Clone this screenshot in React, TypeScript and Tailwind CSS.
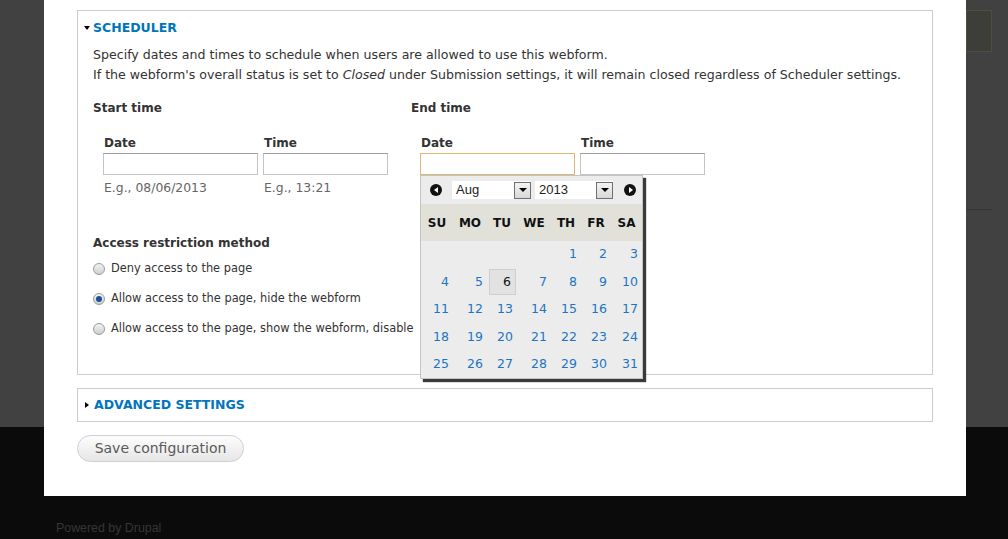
import React from 'react';

const weeks: (number | null)[][] = [
  [null, null, null, null, 1, 2, 3],
  [4, 5, 6, 7, 8, 9, 10],
  [11, 12, 13, 14, 15, 16, 17],
  [18, 19, 20, 21, 22, 23, 24],
  [25, 26, 27, 28, 29, 30, 31],
];

const dayNames = ['SU', 'MO', 'TU', 'WE', 'TH', 'FR', 'SA'];

const SelectBox = ({ value, width }: { value: string; width: string }) => (
  <div className={`${width} h-[18px] bg-white flex items-center justify-between`}>
    <span className="pl-[4px] text-[13px] text-[#222] font-['Liberation_Sans',Arial,sans-serif]">{value}</span>
    <span className="w-[17px] h-[17px] border border-[#707070] bg-gradient-to-b from-[#f4f4f4] to-[#d8d8d8] flex items-center justify-center">
      <span className="w-0 h-0 border-l-[4px] border-r-[4px] border-t-[4px] border-l-transparent border-r-transparent border-t-black" />
    </span>
  </div>
);

const NavCircle = ({ dir }: { dir: 'prev' | 'next' }) => (
  <span className="w-[12px] h-[12px] rounded-full bg-[#111] flex items-center justify-center">
    {dir === 'prev' ? (
      <span className="w-0 h-0 border-t-[3px] border-b-[3px] border-r-[4px] border-t-transparent border-b-transparent border-r-white mr-[1px]" />
    ) : (
      <span className="w-0 h-0 border-t-[3px] border-b-[3px] border-l-[4px] border-t-transparent border-b-transparent border-l-white ml-[1px]" />
    )}
  </span>
);

const DatePicker = () => (
  <div className="absolute left-0 top-[22px] z-10 w-[223px] h-[204px] bg-[#ececec] border border-[#c4c4c4] shadow-[3px_3px_1px_#3a3a3a]">
    {/* header */}
    <div className="h-[28px] flex items-center">
      <span className="ml-[9px]"><NavCircle dir="prev" /></span>
      <span className="ml-[10px]"><SelectBox value="Aug" width="w-[79px]" /></span>
      <span className="ml-[4px]"><SelectBox value="2013" width="w-[78px]" /></span>
      <span className="ml-[11px]"><NavCircle dir="next" /></span>
    </div>
    <div className="h-[37px] bg-[#e1e1da] grid grid-cols-[32px_34px_30px_34px_30px_30px_31px] items-center">
      {dayNames.map((d) => (
        <span key={d} className="text-center text-[12px] font-bold text-[#111]">{d}</span>
      ))}
    </div>
    <div className="grid grid-cols-[32px_34px_30px_34px_30px_30px_31px] grid-rows-[27px_28px_27px_28px_26px]">
      {weeks.flat().map((n, i) =>
        n === 6 ? (
          <div key={i} className="p-[1px] pl-[2px]">
            <div className="h-full bg-[#e2e2e2] border border-[#cfcfcf] flex items-center justify-end pr-[4px] text-[12.5px] text-[#111]">
              {n}
            </div>
          </div>
        ) : (
          <div key={i} className="flex items-center justify-end pr-[4px] text-[12.5px] text-[#1e74c4]">
            {n ?? ''}
          </div>
        ),
      )}
    </div>
  </div>
);

const TextInput = ({ width, focused }: { width: string; focused?: boolean }) => (
  <div
    className={`${width} h-[22px] bg-white border ${
      focused ? 'border-[#dcb870]' : 'border-[#c4c4c4] border-t-[#9c9c9c]'
    }`}
  />
);

const Radio = ({ checked, label }: { checked?: boolean; label: string }) => (
  <div className="h-[20px] flex items-center">
    <span className="w-[12px] h-[12px] rounded-full border border-[#9a9a9a] bg-gradient-to-b from-[#f2f2f2] to-[#cfcfcf] flex items-center justify-center">
      {checked && <span className="w-[6px] h-[6px] rounded-full bg-[#1d4f9a]" />}
    </span>
    <span className="ml-[6px] text-[11.4px] text-[#333]">{label}</span>
  </div>
);

export default function App() {
  return (
    <div className="relative w-[1008px] h-[539px] overflow-hidden font-['DejaVu_Sans',Verdana,sans-serif]">
      {/* page behind the dialog */}
      <div className="h-[427px] bg-[#414141] flex flex-col items-end pr-[16px] pt-[10px]">
        <div className="w-[26px] h-[42px] border border-[#4c4f3c] bg-[#3d3e3a]" />
        <div className="mt-[157px] w-[32px] border-t border-[#363636]" />
      </div>
      <div className="h-[112px] bg-[#0b0b0b] pl-[56px] pt-[88px]">
        <span className="text-[12.4px] leading-[16px] text-[#363636] font-['Liberation_Sans',Arial,sans-serif]">Powered by Drupal</span>
      </div>

      {/* dialog */}
      <div className="absolute left-[44px] top-0 w-[922px] h-[496px] bg-white px-[33px] pt-[10px] text-[#333]">
        {/* Scheduler fieldset */}
        <div className="border border-[#cccccc] pl-[15px] pt-[7px] pb-[35px]">
          <div className="h-[20px] flex items-center -ml-[9px]">
            <span className="w-0 h-0 border-l-[3px] border-r-[3px] border-t-[4px] border-l-transparent border-r-transparent border-t-black" />
            <span className="ml-[3px] text-[12.5px] font-bold text-[#0074bd]">SCHEDULER</span>
          </div>
          <p className="mt-[7px] text-[12.6px] leading-[20px]">
            Specify dates and times to schedule when users are allowed to use this webform.
            <br />
            If the webform's overall status is set to <em>Closed</em> under Submission settings, it will remain closed regardless of Scheduler settings.
          </p>

          <div className="mt-[13px] flex">
            <div className="w-[318px]">
              <div className="text-[12px] leading-[20px] font-bold">Start time</div>
              <div className="mt-[15px] pl-[10px] flex gap-[5px]">
                <div>
                  <div className="pl-[1px] text-[12px] leading-[20px] font-bold">Date</div>
                  <TextInput width="w-[155px]" />
                  <div className="mt-[3px] pl-[1px] text-[12.4px] leading-[20px] text-[#666]">E.g., 08/06/2013</div>
                </div>
                <div>
                  <div className="pl-[1px] text-[12px] leading-[20px] font-bold">Time</div>
                  <TextInput width="w-[125px]" />
                  <div className="mt-[3px] pl-[1px] text-[12.4px] leading-[20px] text-[#666]">E.g., 13:21</div>
                </div>
              </div>
            </div>
            <div>
              <div className="text-[12px] leading-[20px] font-bold">End time</div>
              <div className="mt-[15px] pl-[9px] flex gap-[5px]">
                <div className="relative">
                  <div className="pl-[1px] text-[12px] leading-[20px] font-bold">Date</div>
                  <div className="relative">
                    <TextInput width="w-[155px]" focused />
                    <DatePicker />
                  </div>
                </div>
                <div>
                  <div className="pl-[1px] text-[12px] leading-[20px] font-bold">Time</div>
                  <TextInput width="w-[125px]" />
                </div>
              </div>
            </div>
          </div>

          <div className="mt-[35px] text-[12px] leading-[20px] font-bold">Access restriction method</div>
          <div className="mt-[6px]">
            <Radio label="Deny access to the page" />
          </div>
          <div className="mt-[10px]">
            <Radio checked label="Allow access to the page, hide the webform" />
          </div>
          <div className="mt-[10px]">
            <Radio label="Allow access to the page, show the webform, disable" />
          </div>
        </div>

        {/* Advanced settings fieldset */}
        <div className="mt-[13px] h-[34px] border border-[#cccccc] pl-[7px] flex items-center">
          <span className="w-0 h-0 border-t-[3px] border-b-[3px] border-l-[4px] border-t-transparent border-b-transparent border-l-black" />
          <span className="ml-[5px] text-[12.5px] font-bold text-[#0074bd]">ADVANCED SETTINGS</span>
        </div>

        <button className="mt-[13px] w-[167px] h-[27px] rounded-full border border-[#cfcfcf] bg-gradient-to-b from-[#fdfdfd] to-[#e6e6e6] text-[14px] text-[#5a5a5a]">
          Save configuration
        </button>
      </div>
    </div>
  );
}
